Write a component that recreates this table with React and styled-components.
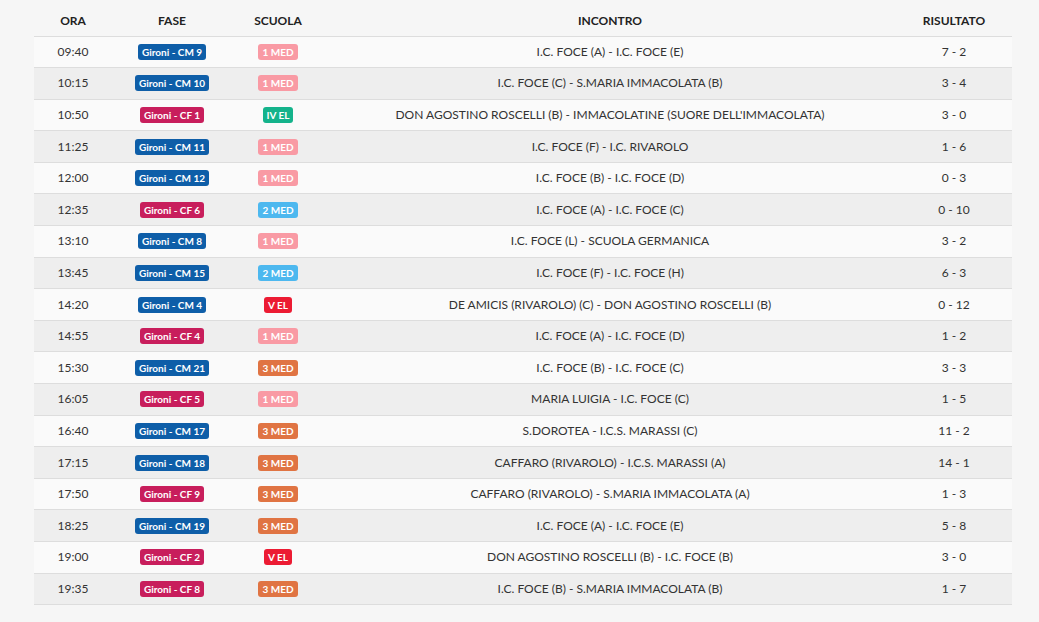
import React from 'react';
import styled, { createGlobalStyle } from 'styled-components';

const GlobalStyle = createGlobalStyle`
  html, body {
    margin: 0;
    padding: 0;
    background: #f6f6f6;
    font-family: Lato, "Open Sans", Arial, sans-serif;
    color: #333;
  }
`;

const Page = styled.div`
  padding: 0 27px 0 34px;
`;

const Table = styled.table`
  width: 978px;
  border-collapse: collapse;
  table-layout: fixed;
  font-size: 12px;
`;

const HeadCell = styled.th`
  width: ${(p) => p.$w}px;
  height: 36px;
  padding: 0 0 8px;
  text-align: center;
  font-size: 12px;
  font-weight: 700;
  color: #222;
  border-bottom: 1px solid #ddd;
  vertical-align: bottom;
  box-sizing: border-box;
`;

const Row = styled.tr`
  background: ${(p) => (p.$odd ? '#fafafa' : '#eeeeee')};
  border-bottom: 1px solid #ddd;
`;

const Cell = styled.td`
  height: 30.6px;
  padding: 0 4px;
  text-align: center;
  vertical-align: middle;
  line-height: 16px;
  color: #333;
  font-size: 12px;
`;

const Badge = styled.span`
  display: inline-block;
  height: 16px;
  line-height: 16px;
  padding: 0 4px;
  border-radius: 3px;
  background: ${(p) => p.$bg};
  color: #fff;
  font-size: 10px;
  font-weight: 700;
  white-space: nowrap;
`;

const faseColors = { CM: '#0e5ea8', CF: '#c81e5c' };

const scuolaColors = {
  '1 MED': '#f99aa4',
  '2 MED': '#4db8ef',
  '3 MED': '#e07443',
  'IV EL': '#14b38b',
  'V EL': '#ec1b33',
};

const matches = [
  ['09:40', 'CM 9', '1 MED', 'I.C. FOCE (A) - I.C. FOCE (E)', '7 - 2'],
  ['10:15', 'CM 10', '1 MED', 'I.C. FOCE (C) - S.MARIA IMMACOLATA (B)', '3 - 4'],
  ['10:50', 'CF 1', 'IV EL', "DON AGOSTINO ROSCELLI (B) - IMMACOLATINE (SUORE DELL'IMMACOLATA)", '3 - 0'],
  ['11:25', 'CM 11', '1 MED', 'I.C. FOCE (F) - I.C. RIVAROLO', '1 - 6'],
  ['12:00', 'CM 12', '1 MED', 'I.C. FOCE (B) - I.C. FOCE (D)', '0 - 3'],
  ['12:35', 'CF 6', '2 MED', 'I.C. FOCE (A) - I.C. FOCE (C)', '0 - 10'],
  ['13:10', 'CM 8', '1 MED', 'I.C. FOCE (L) - SCUOLA GERMANICA', '3 - 2'],
  ['13:45', 'CM 15', '2 MED', 'I.C. FOCE (F) - I.C. FOCE (H)', '6 - 3'],
  ['14:20', 'CM 4', 'V EL', 'DE AMICIS (RIVAROLO) (C) - DON AGOSTINO ROSCELLI (B)', '0 - 12'],
  ['14:55', 'CF 4', '1 MED', 'I.C. FOCE (A) - I.C. FOCE (D)', '1 - 2'],
  ['15:30', 'CM 21', '3 MED', 'I.C. FOCE (B) - I.C. FOCE (C)', '3 - 3'],
  ['16:05', 'CF 5', '1 MED', 'MARIA LUIGIA - I.C. FOCE (C)', '1 - 5'],
  ['16:40', 'CM 17', '3 MED', 'S.DOROTEA - I.C.S. MARASSI (C)', '11 - 2'],
  ['17:15', 'CM 18', '3 MED', 'CAFFARO (RIVAROLO) - I.C.S. MARASSI (A)', '14 - 1'],
  ['17:50', 'CF 9', '3 MED', 'CAFFARO (RIVAROLO) - S.MARIA IMMACOLATA (A)', '1 - 3'],
  ['18:25', 'CM 19', '3 MED', 'I.C. FOCE (A) - I.C. FOCE (E)', '5 - 8'],
  ['19:00', 'CF 2', 'V EL', 'DON AGOSTINO ROSCELLI (B) - I.C. FOCE (B)', '3 - 0'],
  ['19:35', 'CF 8', '3 MED', 'I.C. FOCE (B) - S.MARIA IMMACOLATA (B)', '1 - 7'],
];

const App = () => {
  return (
    <Page>
      <GlobalStyle />
      <Table>
        <thead>
          <tr>
            <HeadCell $w={78}>ORA</HeadCell>
            <HeadCell $w={120}>FASE</HeadCell>
            <HeadCell $w={92}>SCUOLA</HeadCell>
            <HeadCell $w={572}>INCONTRO</HeadCell>
            <HeadCell $w={116}>RISULTATO</HeadCell>
          </tr>
        </thead>
        <tbody>
          {matches.map(([ora, fase, scuola, incontro, ris], i) => (
            <Row key={i} $odd={i % 2 === 0}>
              <Cell>{ora}</Cell>
              <Cell>
                <Badge $bg={faseColors[fase.slice(0, 2)]}>Gironi - {fase}</Badge>
              </Cell>
              <Cell>
                <Badge $bg={scuolaColors[scuola]}>{scuola}</Badge>
              </Cell>
              <Cell>{incontro}</Cell>
              <Cell>{ris}</Cell>
            </Row>
          ))}
        </tbody>
      </Table>
    </Page>
  );
};

export default App;
